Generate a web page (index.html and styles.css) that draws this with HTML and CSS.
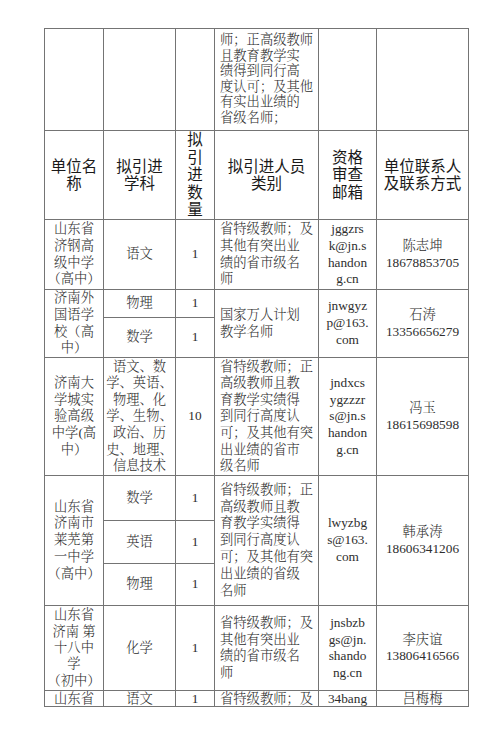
FILE: index.html
```html
<!DOCTYPE html>
<html lang="zh-CN">
<head>
<meta charset="utf-8">
<title>拟引进人员表</title>
<link rel="stylesheet" href="styles.css">
</head>
<body>
<table class="sheet">
  <colgroup>
    <col class="c-unit">
    <col class="c-subject">
    <col class="c-count">
    <col class="c-type">
    <col class="c-mail">
    <col class="c-contact">
  </colgroup>
  <tr class="row-tail">
    <td></td><td></td><td></td>
    <td class="desc tail">师；正高级教师<br>且教育教学实<br>绩得到同行高<br>度认可；及其他<br>有实出业绩的<br>省级名师；</td>
    <td></td><td></td>
  </tr>
  <tr class="row-head">
    <th>单位名<br>称</th>
    <th>拟引进<br>学科</th>
    <th>拟<br>引<br>进<br>数<br>量</th>
    <th>拟引进人员<br>类别</th>
    <th>资格<br>审查<br>邮箱</th>
    <th>单位联系人<br>及联系方式</th>
  </tr>
  <tr class="row-jg">
    <td>山东省<br>济钢高<br>级中学<br>（高中）</td>
    <td>语文</td>
    <td>1</td>
    <td class="desc">省特级教师；及<br>其他有突出业<br>绩的省市级名<br>师</td>
    <td>jggzrs<br>k@jn.s<br>handon<br>g.cn</td>
    <td>陈志坤<br>18678853705</td>
  </tr>
  <tr class="row-wgy1">
    <td rowspan="2">济南外<br>国语学<br>校（高<br>中）</td>
    <td>物理</td>
    <td>1</td>
    <td rowspan="2" class="desc">国家万人计划<br>教学名师</td>
    <td rowspan="2">jnwgyz<br>p@163.<br>com</td>
    <td rowspan="2">石涛<br>13356656279</td>
  </tr>
  <tr class="row-wgy2">
    <td>数学</td>
    <td>1</td>
  </tr>
  <tr class="row-dxc">
    <td>济南大<br>学城实<br>验高级<br>中学(高<br>中）</td>
    <td>语文、数<br>学、英语、<br>物理、化<br>学、生物、<br>政治、历<br>史、地理、<br>信息技术</td>
    <td>10</td>
    <td class="desc">省特级教师；正<br>高级教师且教<br>育教学实绩得<br>到同行高度认<br>可；及其他有突<br>出业绩的省市<br>级名师</td>
    <td>jndxcs<br>ygzzzr<br>s@jn.s<br>handon<br>g.cn</td>
    <td>冯玉<br>18615698598</td>
  </tr>
  <tr class="row-lw1">
    <td rowspan="3">山东省<br>济南市<br>莱芜第<br>一中学<br>（高中）</td>
    <td>数学</td>
    <td>1</td>
    <td rowspan="3" class="desc">省特级教师；正<br>高级教师且教<br>育教学实绩得<br>到同行高度认<br>可；及其他有突<br>出业绩的省级<br>名师</td>
    <td rowspan="3">lwyzbg<br>s@163.<br>com</td>
    <td rowspan="3">韩承涛<br>18606341206</td>
  </tr>
  <tr class="row-lw2">
    <td>英语</td>
    <td>1</td>
  </tr>
  <tr class="row-lw3">
    <td>物理</td>
    <td>1</td>
  </tr>
  <tr class="row-sbz">
    <td>山东省<br>济南 第<br>十八中<br>学<br>（初中）</td>
    <td>化学</td>
    <td>1</td>
    <td class="desc">省特级教师；及<br>其他有突出业<br>绩的省市级名<br>师</td>
    <td>jnsbzb<br>gs@jn.<br>shando<br>ng.cn</td>
    <td>李庆谊<br>13806416566</td>
  </tr>
  <tr class="row-last">
    <td>山东省</td>
    <td>语文</td>
    <td>1</td>
    <td class="desc">省特级教师；及</td>
    <td>34bang</td>
    <td>吕梅梅</td>
  </tr>
</table>
</body>
</html>
```

FILE: styles.css
```css
html, body {
  margin: 0;
  padding: 0;
  background: #ffffff;
}

.sheet {
  margin: 28px 0 0 44px;
  border-collapse: collapse;
  table-layout: fixed;
  width: 424px;
}

.c-unit { width: 59px; }
.c-subject { width: 72px; }
.c-count { width: 39px; }
.c-type { width: 104px; }
.c-mail { width: 58px; }
.c-contact { width: 92px; }

.sheet td,
.sheet th {
  border: 1px solid #747474;
  padding: 0 1px;
  text-align: center;
  vertical-align: middle;
  white-space: nowrap;
  overflow: hidden;
}

.sheet td {
  font-family: "Liberation Serif", "Noto Serif CJK SC", "Noto Sans CJK SC", serif;
  font-weight: 300;
  font-size: 13.3px;
  line-height: 16.8px;
  color: #2e2e2e;
}

.sheet th {
  font-family: "Liberation Sans", "Noto Sans CJK SC", sans-serif;
  font-weight: 400;
  font-size: 15.5px;
  line-height: 17.5px;
  color: #1a1a1a;
}

.sheet td.desc {
  text-align: left;
  padding-left: 5px;
}

.sheet td.tail {
  vertical-align: top;
  padding-top: 3px;
  line-height: 15.5px;
}

.row-tail { height: 102px; }
.row-head { height: 89px; }
.row-jg { height: 70px; }
.row-wgy1 { height: 28px; }
.row-wgy2 { height: 40px; }
.row-dxc { height: 118px; }
.row-dxc td { line-height: 16.6px; }
.row-lw1 { height: 45px; }
.row-lw2 { height: 43px; }
.row-lw3 { height: 42px; }
.row-sbz { height: 85px; }
.row-sbz td { line-height: 16.4px; }
.row-last { height: 16px; }
.row-last td { line-height: 14px; }
```
